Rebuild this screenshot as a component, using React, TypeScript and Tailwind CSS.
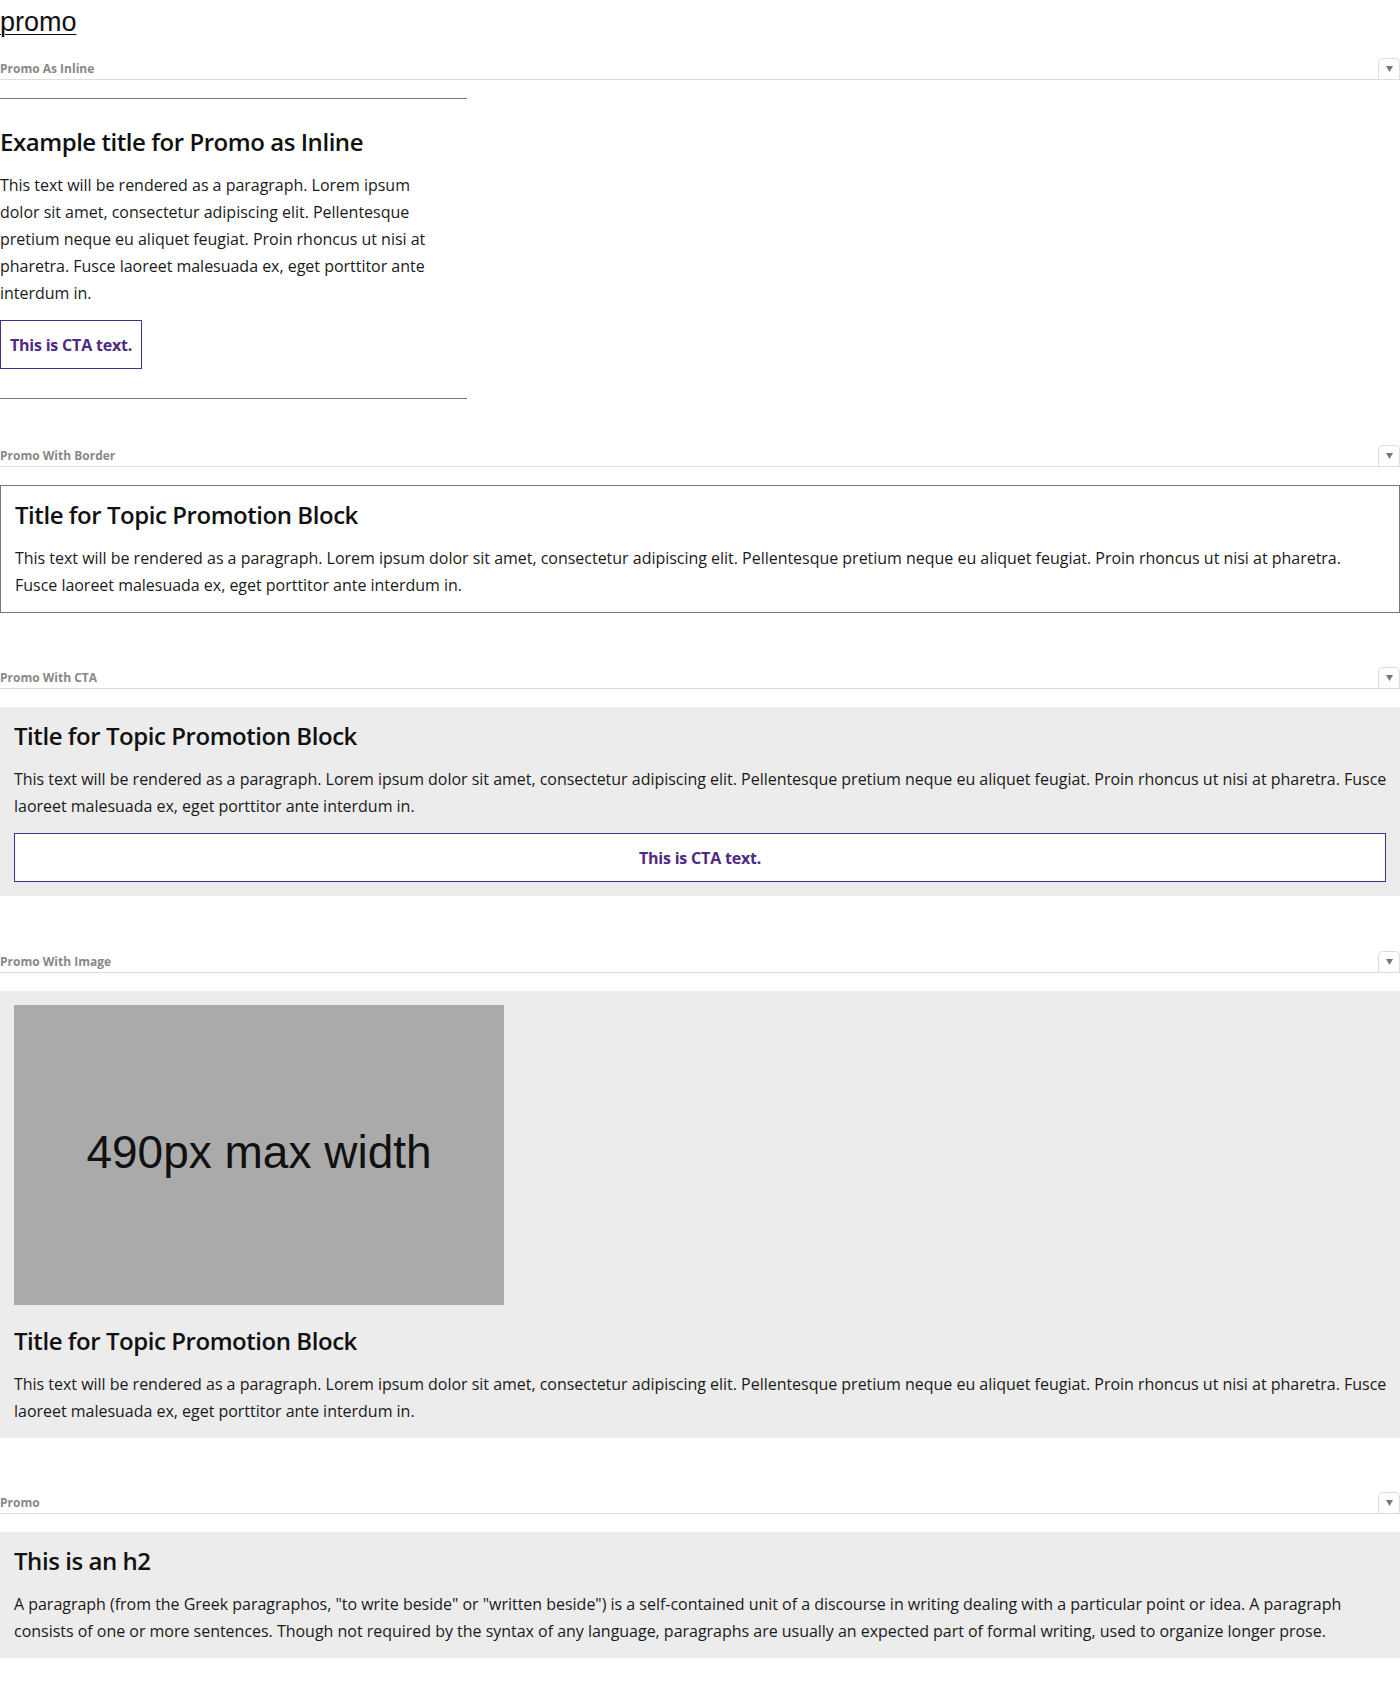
import React from "react";

const INLINE_LINES = [
  "This text will be rendered as a paragraph. Lorem ipsum",
  "dolor sit amet, consectetur adipiscing elit. Pellentesque",
  "pretium neque eu aliquet feugiat. Proin rhoncus ut nisi at",
  "pharetra. Fusce laoreet malesuada ex, eget porttitor ante",
  "interdum in.",
];

const BORDER_LINES = [
  "This text will be rendered as a paragraph. Lorem ipsum dolor sit amet, consectetur adipiscing elit. Pellentesque pretium neque eu aliquet feugiat. Proin rhoncus ut nisi at pharetra.",
  "Fusce laoreet malesuada ex, eget porttitor ante interdum in.",
];

const WIDE_LINES = [
  "This text will be rendered as a paragraph. Lorem ipsum dolor sit amet, consectetur adipiscing elit. Pellentesque pretium neque eu aliquet feugiat. Proin rhoncus ut nisi at pharetra. Fusce",
  "laoreet malesuada ex, eget porttitor ante interdum in.",
];

const PROMO_LINES = [
  'A paragraph (from the Greek paragraphos, "to write beside" or "written beside") is a self-contained unit of a discourse in writing dealing with a particular point or idea. A paragraph',
  "consists of one or more sentences. Though not required by the syntax of any language, paragraphs are usually an expected part of formal writing, used to organize longer prose.",
];

function SectionLabel({ children }: { children: React.ReactNode }) {
  return (
    <div className="flex h-[22px] items-end justify-between border-b border-[#dddddd]">
      <span className="pb-[4px] text-[12px] font-bold leading-none text-[#888888]">{children}</span>
      <div className="flex h-[21px] w-[22px] items-center justify-center rounded-t-[5px] border border-b-0 border-[#dddddd]">
        <svg width="7" height="6" viewBox="0 0 7 6" aria-hidden="true">
          <path d="M0 0H7L3.5 6Z" fill="#777777" />
        </svg>
      </div>
    </div>
  );
}

function Title({ children, className = "" }: { children: React.ReactNode; className?: string }) {
  return (
    <h2 className={`text-[24px] font-semibold leading-[30px] tracking-[-0.45px] text-[#111111] ${className}`}>
      {children}
    </h2>
  );
}

function Para({ lines, className = "" }: { lines: string[]; className?: string }) {
  return (
    <p className={`whitespace-nowrap text-[16px] leading-[27px] tracking-[-0.02px] text-[#1a1a1a] ${className}`}>
      {lines.map((l, i) => (
        <React.Fragment key={i}>
          {l}
          {i < lines.length - 1 && <br />}
        </React.Fragment>
      ))}
    </p>
  );
}

export default function App() {
  return (
    <div className="min-h-screen bg-white pb-[36px] font-['Open_Sans','Noto_Sans',sans-serif]">
      <h1 className="pt-[5px] font-['Liberation_Sans',Arial,sans-serif] text-[27px] leading-[34px] text-[#111111]">
        <span className="underline decoration-1 underline-offset-[3px]">promo</span>
      </h1>

      {/* Promo As Inline */}
      <section className="mt-[19px]">
        <SectionLabel>Promo As Inline</SectionLabel>
        <div className="mt-[18px] w-[467px] border-t border-[#777777]">
          <Title className="mt-[28px]">Example title for Promo as Inline</Title>
          <Para className="mt-[15px]" lines={INLINE_LINES} />
          <a className="mt-[13px] flex h-[49px] w-[142px] items-center justify-center border border-[#4e2a84] text-[16px] font-bold tracking-[-0.2px] text-[#4e2a84]">
            This is CTA text.
          </a>
          <div className="mt-[29px] border-t border-[#777777]" />
        </div>
      </section>

      {/* Promo With Border */}
      <section className="mt-[46px]">
        <SectionLabel>Promo With Border</SectionLabel>
        <div className="mt-[18px] border border-[#777777] px-[14px] pb-[13px] pt-[14px]">
          <Title>Title for Topic Promotion Block</Title>
          <Para className="mt-[15px]" lines={BORDER_LINES} />
        </div>
      </section>

      {/* Promo With CTA */}
      <section className="mt-[54px]">
        <SectionLabel>Promo With CTA</SectionLabel>
        <div className="mt-[18px] bg-[#ececec] p-[14px]">
          <Title>Title for Topic Promotion Block</Title>
          <Para className="mt-[15px]" lines={WIDE_LINES} />
          <a className="mt-[13px] flex h-[49px] w-full items-center justify-center border border-[#4e2a84] bg-white text-[16px] font-bold tracking-[-0.2px] text-[#4e2a84]">
            This is CTA text.
          </a>
        </div>
      </section>

      {/* Promo With Image */}
      <section className="mt-[55px]">
        <SectionLabel>Promo With Image</SectionLabel>
        <div className="mt-[18px] bg-[#ececec] px-[14px] pb-[13px] pt-[14px]">
          <div className="flex h-[300px] w-[490px] items-center justify-center bg-[#aaaaaa] pb-[6px] font-['Liberation_Sans',Arial,sans-serif] text-[46px] text-[#111111]">
            490px max width
          </div>
          <Title className="mt-[21px]">Title for Topic Promotion Block</Title>
          <Para className="mt-[15px]" lines={WIDE_LINES} />
        </div>
      </section>

      {/* Promo */}
      <section className="mt-[54px]">
        <SectionLabel>Promo</SectionLabel>
        <div className="mt-[18px] bg-[#ececec] px-[14px] pb-[13px] pt-[14px]">
          <Title>This is an h2</Title>
          <Para className="mt-[15px]" lines={PROMO_LINES} />
        </div>
      </section>
    </div>
  );
}
